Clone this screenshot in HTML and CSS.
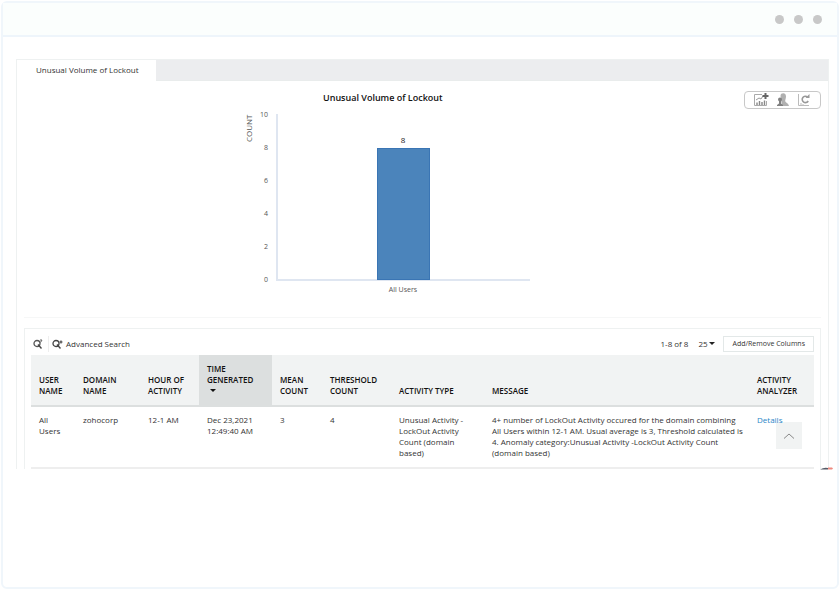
FILE: index.html
```html
<!DOCTYPE html>
<html lang="en">
<head>
  <meta charset="UTF-8">
  <meta name="viewport" content="width=device-width, initial-scale=1.0">
  <title>Unusual Volume of Lockout</title>
  <link rel="stylesheet" href="styles.css">
</head>
<body>
  <div class="window">
    <header class="titlebar">
      <span class="dot"></span>
      <span class="dot"></span>
      <span class="dot"></span>
    </header>

    <main class="panel">
      <nav class="tabs">
        <button type="button" class="tab">Unusual Volume of Lockout</button>
      </nav>

      <section class="chart-section">
        <div class="chart-tools">
          <button type="button" aria-label="Add to dashboard">
            <svg width="16" height="14" viewBox="0 0 16 14">
              <path d="M9 1.500H1.500v11h12V8" fill="none" stroke="#aaa" />
              <path d="M3 7l3-2 2 1 2-3" fill="none" stroke="#999" />
              <path d="M4 12V9.500M6.500 12V8M9 12V9M11.500 12V7.500" stroke="#888" stroke-width="1.400" />
              <path d="M12.500 0v6M9.500 3h6" stroke="#666" stroke-width="2" />
            </svg>
          </button>
          <button type="button" aria-label="Users">
            <svg width="14" height="14" viewBox="0 0 14 14">
              <path d="M4.500 3C4.500 1 5.800.3 7.300.3S10 1.500 10 3.500c0 2-.8 3-.8 4.500 0 1.500 3.300 2 3.800 5H6z" fill="#b0b0b0" />
              <circle cx="4" cy="6.500" r="2" fill="#808080" />
              <path d="M3 8h2v2.500L7 12v1H1v-1l2-1.500z" fill="#808080" />
            </svg>
          </button>
          <button type="button" aria-label="Refresh chart">
            <svg width="14" height="14" viewBox="0 0 14 14">
              <path d="M1.500 1v11.500H12M4 12v-2M6 12v-1" fill="none" stroke="#bbb" />
              <path d="M10.500 4A3.200 3.200 0 1 0 11.200 8" fill="none" stroke="#999" stroke-width="1.600" />
              <path d="M8.500 5h4V1z" fill="#999" />
            </svg>
          </button>
        </div>
        <h1>Unusual Volume of Lockout</h1>
        <svg class="chart" width="300" height="192" viewBox="0 0 300 192">
          <g class="axis-label" text-anchor="end">
            <text x="28" y="12">10</text>
            <text x="28" y="45">8</text>
            <text x="28" y="78">6</text>
            <text x="28" y="111">4</text>
            <text x="28" y="144">2</text>
            <text x="28" y="177">0</text>
          </g>
          <text class="axis-title" transform="translate(12 37) rotate(-90)">COUNT</text>
          <path class="axis" d="M37 9v166h253" />
          <rect class="bar" x="137.500" y="43.500" width="52" height="131" />
          <text class="bar-value" x="163" y="38" text-anchor="middle">8</text>
          <text class="axis-name" x="163" y="187" text-anchor="middle">All Users</text>
        </svg>
      </section>

      <section class="results">
        <div class="toolbar">
          <button type="button" class="search" aria-label="Search">
            <svg width="10" height="10" viewBox="0 0 10 10">
              <circle cx="4" cy="4.500" r="3" fill="none" stroke="#555" stroke-width="1.300" />
              <path d="M5 5.500l3.500 4" stroke="#444" stroke-width="1.400" />
              <path d="M7 1h2L7.500 3.500" fill="none" stroke="#666" />
            </svg>
          </button>
          <button type="button" class="advanced">
            <svg width="11" height="10" viewBox="0 0 11 10">
              <circle cx="4" cy="4.500" r="3" fill="none" stroke="#444" stroke-width="1.300" />
              <path d="M5 5.500l3.500 4" stroke="#444" stroke-width="1.400" />
              <path d="M9 1.500v3M7.500 3h3" stroke="#444" stroke-width="1.200" />
            </svg>
            Advanced Search
          </button>
          <span class="range">1-8 of 8</span>
          <span class="page-size">
            <select aria-label="Rows per page">
              <option>25</option>
            </select>
          </span>
          <button type="button" class="columns">Add/Remove Columns</button>
        </div>

        <table>
          <colgroup>
            <col class="col-user">
            <col class="col-domain">
            <col class="col-hour">
            <col class="col-time">
            <col class="col-mean">
            <col class="col-threshold">
            <col class="col-type">
            <col>
            <col class="col-analyzer">
          </colgroup>
          <thead>
            <tr>
              <th>USER NAME</th>
              <th>DOMAIN NAME</th>
              <th>HOUR OF ACTIVITY</th>
              <th class="sorted">TIME GENERATED <span class="caret"></span></th>
              <th>MEAN COUNT</th>
              <th>THRESHOLD COUNT</th>
              <th>ACTIVITY TYPE</th>
              <th>MESSAGE</th>
              <th>ACTIVITY ANALYZER</th>
            </tr>
          </thead>
          <tbody>
            <tr>
              <td>All<br>Users</td>
              <td>zohocorp</td>
              <td>12-1 AM</td>
              <td>Dec 23,2021<br>12:49:40 AM</td>
              <td>3</td>
              <td>4</td>
              <td>Unusual Activity -<br>LockOut Activity<br>Count (domain<br>based)</td>
              <td>4+ number of LockOut Activity occured for the domain combining<br>All Users within 12-1 AM. Usual average is 3, Threshold calculated is<br>4. Anomaly category:Unusual Activity -LockOut Activity Count<br>(domain based)</td>
              <td><a href="#">Details</a></td>
            </tr>
          </tbody>
        </table>
      </section>

      <button type="button" class="to-top" aria-label="Back to top">
        <svg width="12" height="6" viewBox="0 0 12 6">
          <path d="M1 5.500l5-4.500 5 4.500" fill="none" stroke="#888" />
        </svg>
      </button>
      <svg class="badge" width="14" height="3" viewBox="0 0 14 3">
        <path d="M0 2.500Q4 0 8 1v1.500z" fill="#555b66" />
        <path d="M8 .5h4l1 1-1 1H8z" fill="#ee8a80" />
      </svg>
    </main>
  </div>
</body>
</html>
```
FILE: styles.css
```css
:root {
  --text-color: #333;
  --line-color: #eef1f1;
  --head-background: #f1f3f3;
}

* {
  margin: 0;
  padding: 0;
  box-sizing: border-box;
}

body {
  font-family: "Open Sans", "Noto Sans", sans-serif;
  font-size: 8px;
  line-height: 11px;
  color: var(--text-color);
  background-color: #fff;
  padding: 1px;
}

button,
select {
  font: inherit;
  color: inherit;
  background: none;
  border: none;
  cursor: pointer;
}

.window {
  min-height: calc(100vh - 2px);
  border: 2px solid #f0f6fb;
  border-radius: 6px;
}

.titlebar {
  display: flex;
  justify-content: flex-end;
  align-items: center;
  gap: 10px;
  height: 34px;
  padding-right: 15px;
  background-color: #fbfefd;
  border-bottom: 2px solid #eef5fb;
}

.dot {
  width: 9px;
  height: 9px;
  border-radius: 50%;
  background-color: #c8c8c8;
}

.panel {
  position: relative;
  margin: 22px 8px 0 13px;
  border: 1px solid var(--line-color);
  border-bottom: none;
}

.tabs {
  display: flex;
  background-color: #ecedef;
  border-bottom: 1px solid #e9ecec;
}

.tab {
  height: 21px;
  padding: 0 17px 2px 19px;
  margin-bottom: -1px;
  background-color: #fff;
}

.chart-section {
  position: relative;
  margin: 0 7px;
  padding-top: 11px;
  border-bottom: 1px solid #f6f7f7;
}

.chart-section h1 {
  padding-left: 299px;
  font-size: 9px;
  font-weight: 600;
  line-height: 12px;
  color: #111;
}

.chart {
  display: block;
  margin: 1px 0 20px 216px;
}

.axis-label,
.axis-name {
  font-size: 7px;
  fill: #555;
}

.axis-title {
  font-size: 8px;
  fill: #555;
}

.axis {
  fill: none;
  stroke: #dfe6f1;
  stroke-width: 2;
}

.bar {
  fill: #4b84bb;
  stroke: #3a75b4;
}

.bar-value {
  font-size: 8px;
  fill: #222;
}

.chart-tools {
  position: absolute;
  top: 10px;
  right: 0;
  display: flex;
  align-items: center;
  gap: 7px;
  height: 18px;
  padding: 0 9px 0 8px;
  border: 1px solid #c8c8c8;
  border-radius: 4px;
}

.chart-tools svg,
.toolbar svg,
.to-top svg {
  display: block;
}

.results {
  margin: 10px 7px 0;
  padding: 7px 6px 0;
  border: 1px solid var(--line-color);
  border-bottom: none;
}

.toolbar {
  display: flex;
  align-items: center;
  height: 16px;
  margin-bottom: 3px;
}

.search {
  height: 16px;
  padding: 3px 5px 3px 2px;
  border-right: 1px solid #eee;
}

.advanced {
  display: flex;
  align-items: center;
  gap: 3px;
  margin-left: 3px;
  padding-bottom: 1px;
}

.range {
  margin-left: auto;
  padding-bottom: 1px;
}

.page-size {
  position: relative;
  margin: 0 8px 0 10px;
  padding-bottom: 1px;
}

.page-size select {
  display: block;
  width: 17px;
  appearance: none;
}

.page-size::after {
  content: "";
  position: absolute;
  top: 4px;
  right: 0;
  border: 3px solid transparent;
  border-top: 3px solid #222;
  border-bottom: none;
  pointer-events: none;
}

.columns {
  height: 16px;
  padding: 0 8px 1px;
  font-size: 7px;
  border: 1px solid #e3e8e8;
}

table {
  width: 100%;
  table-layout: fixed;
  border-collapse: collapse;
}

.col-user { width: 44px; }
.col-domain { width: 65px; }
.col-hour { width: 59px; }
.col-time { width: 73px; }
.col-mean { width: 50px; }
.col-threshold { width: 69px; }
.col-type { width: 93px; }
.col-analyzer { width: 65px; }

th,
td {
  padding: 7px 0 9px 8px;
  text-align: left;
}

th {
  height: 51px;
  vertical-align: bottom;
  font-weight: 600;
  color: #111;
  background-color: var(--head-background);
  border-bottom: 2px solid #dcdfdf;
}

th.sorted {
  background-color: #dcdfdf;
}

.caret {
  display: block;
  margin: 4px 3px;
  width: 6px;
  border: 3px solid transparent;
  border-top: 3px solid #111;
  border-bottom: none;
}

td {
  vertical-align: top;
  border-bottom: 2px solid #eee;
}

td a {
  position: relative;
  z-index: 1;
  color: #2a85c7;
  text-decoration: none;
}

.to-top {
  position: absolute;
  right: 26px;
  bottom: 20px;
  display: flex;
  align-items: center;
  justify-content: center;
  width: 26px;
  height: 27px;
  background-color: var(--head-background);
}

.badge {
  position: absolute;
  right: -6px;
  bottom: -1px;
}
```
